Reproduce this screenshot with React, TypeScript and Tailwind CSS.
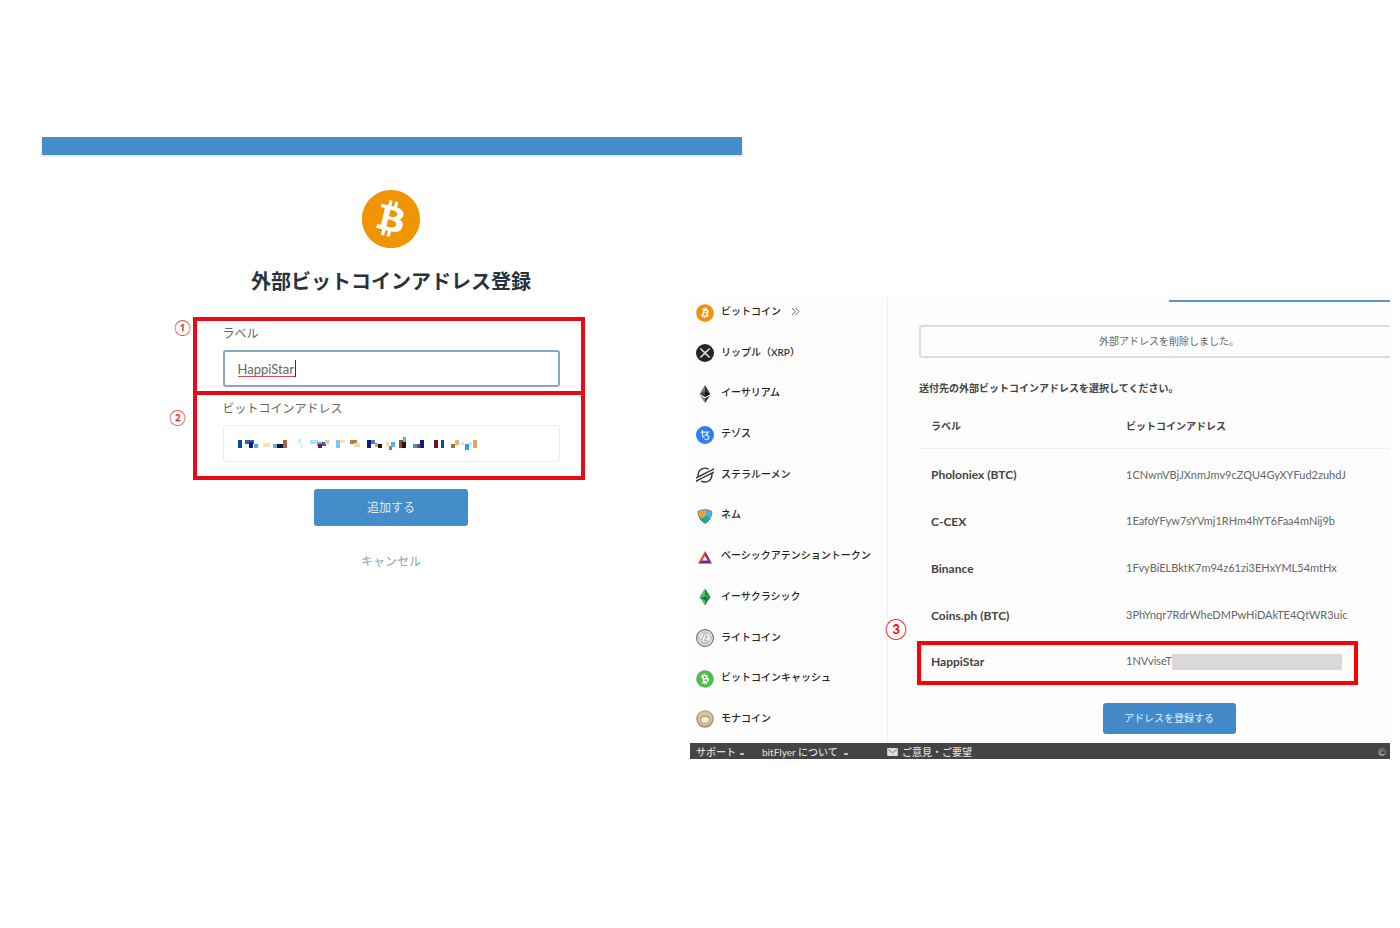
import React from "react";
import { FaBitcoin } from "react-icons/fa";
import { SiStellar } from "react-icons/si";

const FONT = "font-['Lato','Noto_Sans_CJK_JP',sans-serif]";

function XrpIcon() {
  return (
    <svg viewBox="0 0 18 18" className="size-[18px]" aria-hidden="true">
      <circle cx="9" cy="9" r="9" fill="#20262c" />
      <path d="M4.400 4.400 7.400 7.600q1.600 1.300 3.200 0l3-3.200M4.400 13.600l3-3.200q1.600-1.300 3.200 0l3 3.200" fill="none" stroke="#e8ecef" strokeWidth="1.400" />
    </svg>
  );
}

function EtherIcon() {
  return (
    <svg viewBox="0 0 18 18" className="size-[18px]" aria-hidden="true">
      <path d="M9 0 3.700 9 9 12z" fill="#777" />
      <path d="M9 0l5.300 9L9 12z" fill="#333" />
      <path d="M3.700 9 9 6.600V12z" fill="#444" />
      <path d="M14.300 9 9 6.600V12z" fill="#111" />
      <path d="M3.900 10.400 9 13.300V18z" fill="#888" />
      <path d="M14.100 10.400 9 13.300V18z" fill="#333" />
    </svg>
  );
}

function TezosIcon() {
  return (
    <svg viewBox="0 0 18 18" className="size-[18px]" aria-hidden="true">
      <circle cx="9" cy="9" r="9" fill="#2c7df7" />
      <path d="M4.500 6.200h7.800L9.600 9c2.200 0 3.200 1 3.200 2.500 0 2-3 2.900-4.200 1.300M6.500 4v5.500c0 1.600 1 2 2.200 1.500" fill="none" stroke="#d9e9ff" strokeWidth="1.300" />
    </svg>
  );
}

function NemIcon() {
  return (
    <svg viewBox="0 0 18 18" className="size-[18px]" aria-hidden="true">
      <path d="M2 4.500Q5.500 2.500 9 2.500L9.500 8Q8 11 3.500 11.500Q1.800 8 2 4.500z" fill="#f0a22e" />
      <path d="M9 2.500q3.500 0 7 2-.1 4-1.700 7.500Q12.500 8 9.500 8z" fill="#5fa9dd" />
      <path d="M3.500 11.500Q8 11 9.500 8q3 0 4.800 4Q12.500 15 9 16.500 5.500 14.800 3.500 11.500z" fill="#20a99b" />
      <path d="M2 4.500Q5.500 2.500 9 2.500t7 2Q15.800 12.500 9 16.500 2.200 12.500 2 4.500z" fill="none" stroke="#4b6f7c" strokeWidth=".7" />
    </svg>
  );
}

function BatIcon() {
  return (
    <svg viewBox="0 0 18 18" className="size-[18px]" aria-hidden="true">
      <path d="M9 3 9 8 6 13 2 15.500z" fill="#f0512d" />
      <path d="M9 3l7 12.500L12 13 9 8z" fill="#9b2468" />
      <path d="M2 15.500 6 12.600h6l4 2.900z" fill="#5d2d91" />
    </svg>
  );
}

function ClassicIcon() {
  return (
    <svg viewBox="0 0 18 18" className="size-[18px]" aria-hidden="true">
      <path d="M9 .5 3.500 9 9 17.500z" fill="#4cc26f" />
      <path d="M9 .5 14.500 9 9 17.500z" fill="#1e8f43" />
      <path d="M4.500 10 9 6.500l4.500 3.500L9 12z" fill="#14733a" />
      <path d="M6 9.500 9 7.500l3 2" fill="none" stroke="#9ce0ae" strokeWidth=".8" />
    </svg>
  );
}

function LitecoinIcon() {
  return (
    <svg viewBox="0 0 18 18" className="size-[18px]" aria-hidden="true">
      <circle cx="9" cy="9" r="8.400" fill="#f4f4f4" stroke="#707070" strokeWidth="1.200" />
      <circle cx="9" cy="9" r="6.200" fill="#ececec" stroke="#a4a4a4" strokeWidth=".9" />
      <path d="M8.200 4.500h2.200L9.300 8.200l1.600-.6-.4 1.500-1.600.6-.6 2.100h4l-.4 1.600H5.600l.9-3-1.200.4.4-1.500 1.200-.4z" fill="#fff" stroke="#909090" strokeWidth=".7" />
    </svg>
  );
}

function MonaIcon() {
  return (
    <svg viewBox="0 0 18 18" className="size-[18px]" aria-hidden="true">
      <circle cx="9" cy="9" r="8.700" fill="#a79667" />
      <circle cx="9" cy="8.500" r="7.300" fill="#d3c7a0" />
      <ellipse cx="9" cy="9.500" rx="5.400" ry="4.200" fill="#b5a478" />
      <ellipse cx="9" cy="9.800" rx="4" ry="2.900" fill="#f3edd9" />
    </svg>
  );
}

const coins: { name: string; icon: React.ReactNode; current?: boolean }[] = [
  { name: "ビットコイン", icon: <FaBitcoin className="size-[18px] text-[#ef9208]" />, current: true },
  { name: "リップル（XRP）", icon: <XrpIcon /> },
  { name: "イーサリアム", icon: <EtherIcon /> },
  { name: "テゾス", icon: <TezosIcon /> },
  { name: "ステラルーメン", icon: <SiStellar className="size-[18px] text-[#333]" /> },
  { name: "ネム", icon: <NemIcon /> },
  { name: "ベーシックアテンショントークン", icon: <BatIcon /> },
  { name: "イーサクラシック", icon: <ClassicIcon /> },
  { name: "ライトコイン", icon: <LitecoinIcon /> },
  { name: "ビットコインキャッシュ", icon: <FaBitcoin className="size-[18px] -rotate-[28deg] text-[#4cc04a]" /> },
  { name: "モナコイン", icon: <MonaIcon /> },
];

const addresses = [
  ["Pholoniex (BTC)", "1CNwnVBjJXnmJmv9cZQU4GyXYFud2zuhdJ"],
  ["C-CEX", "1EafoYFyw7sYVmj1RHm4hYT6Faa4mNij9b"],
  ["Binance", "1FvyBiELBktK7m94z61zi3EHxYML54mtHx"],
  ["Coins.ph (BTC)", "3PhYnqr7RdrWheDMPwHiDAkTE4QtWR3uic"],
];

const mosaic: [number, number, number, number, string][] = [
  [15, 15, 4, 8, "#0b4a9c"], [22, 15, 9, 4, "#2a66a8"], [26, 17, 4, 6, "#0a1f80"], [31, 19, 4, 4, "#5aa8d8"],
  [40, 18, 7, 4, "#f9e2b8"], [50, 19, 5, 4, "#7aa8d0"], [54, 19, 8, 4, "#0a1848"], [60, 15, 4, 8, "#a5663a"],
  [75, 14, 3, 4, "#c4f2fa"], [77, 19, 3, 4, "#dff5dc"], [87, 15, 8, 4, "#a8e2fb"], [94, 17, 5, 4, "#6aa2d8"],
  [95, 19, 4, 4, "#74182e"], [99, 17, 4, 4, "#3f62ad"], [102, 15, 4, 4, "#efc19a"], [113, 15, 4, 8, "#7cc8f0"],
  [117, 15, 5, 3, "#fadfae"], [127, 15, 7, 4, "#bb7a3b"], [131, 18, 6, 4, "#f2e0aa"], [144, 15, 4, 8, "#0a1a80"],
  [148, 15, 4, 4, "#3a80c8"], [152, 18, 3, 4, "#d6a05c"], [155, 19, 4, 4, "#301020"], [163, 17, 3, 4, "#f6dd9a"],
  [166, 21, 3, 4, "#b87838"], [168, 17, 4, 5, "#58b6e6"], [176, 15, 4, 8, "#8c4a28"], [179, 17, 4, 6, "#1c1430"],
  [180, 12, 3, 5, "#58b0e6"], [190, 19, 5, 4, "#4a90c8"], [194, 19, 4, 4, "#8a4a30"], [197, 15, 4, 8, "#101c8c"],
  [211, 15, 4, 8, "#6c1426"], [218, 15, 3, 8, "#16449c"], [228, 19, 4, 4, "#b06c30"], [232, 15, 4, 5, "#eab468"],
  [238, 17, 3, 3, "#b4ecf8"], [242, 19, 4, 6, "#2f9fe0"], [246, 17, 3, 4, "#cdeef8"], [250, 15, 4, 8, "#e0a468"],
];

function RegisterPanel() {
  return (
    <section className="ml-[3%] w-1/2 shrink-0 pt-[137px]">
      <header className="h-[18px] bg-[#458cca] shadow-[0_1px_2px_#d8d8e4]" />
      <div className="flex flex-col items-center pt-[34px] pr-[2px]">
        <FaBitcoin className="size-[60px] text-[#f19402]" aria-hidden="true" />
        <h1 className="mt-[17px] text-[20px] leading-[30px] font-bold text-[#28313e]">外部ビットコインアドレス登録</h1>
        <form className="mt-[21px] flex w-[337px] flex-col items-center" onSubmit={(e) => e.preventDefault()}>
          <div className="relative -mr-[25px] -ml-[30px] w-[392px] border-4 border-[#e60b17] pt-[5px] pr-[21px] pb-[4px] pl-[26px]">
            <span className="absolute -top-[4px] -left-[22px] text-[15px] leading-[20px] text-[#ee1c24]">①</span>
            <label htmlFor="label" className="block text-[12px] leading-[16px] text-[#666]">ラベル</label>
            <div className="relative mt-[8px]">
              <input
                id="label"
                defaultValue="HappiStar"
                className="h-[37px] w-full rounded-[3px] border-2 border-[#86a7c2] bg-white px-[13px] text-[13px] text-[#666] outline-none"
              />
              <span className="absolute top-[26px] left-[15px] h-px w-[57px] bg-[#e0455a]" />
              <span className="absolute top-[10px] left-[72px] h-[17px] w-px bg-[#333]" />
            </div>
          </div>
          <div className="relative -mt-[4px] -mr-[25px] -ml-[30px] w-[392px] border-4 border-[#e60b17] pt-[6px] pr-[21px] pb-[14px] pl-[26px]">
            <span className="absolute top-[12px] -left-[27px] text-[15px] leading-[20px] text-[#ee1c24]">②</span>
            <label htmlFor="address" className="block text-[12px] leading-[16px] text-[#666]">ビットコインアドレス</label>
            <div className="relative mt-[8px]">
              <input id="address" className="h-[37px] w-full rounded-[3px] border border-[#ececec] bg-white px-[13px] text-[13px] outline-none" />
              <svg viewBox="0 0 270 40" className="pointer-events-none absolute top-0 left-0 h-[40px] w-[270px]" aria-hidden="true">
                {mosaic.map(([x, y, w, h, c], i) => (
                  <rect key={i} x={x} y={y} width={w} height={h} fill={c} />
                ))}
              </svg>
            </div>
          </div>
          <button type="submit" className="mt-[9px] h-[37px] w-[154px] rounded-[3px] bg-[#458cca] text-[12px] text-[#dcebf7]">追加する</button>
          <a href="#" className="mt-[28px] text-[12px] leading-[16px] text-[#7fa3c4]">キャンセル</a>
        </form>
      </div>
    </section>
  );
}

function Sidebar() {
  return (
    <nav className="w-[198px] shrink-0 border-r border-[#eee] pt-[4px] pb-[15px] pl-[6px]">
      <ul className="flex h-full flex-col justify-between">
        {coins.map((c) => (
          <li key={c.name}>
            <a href="#" className="flex h-5 items-center gap-[7px] text-[10px] leading-[20px] font-medium whitespace-nowrap text-[#222]">
              <span className="mt-[3px] shrink-0">{c.icon}</span>
              <span>{c.name}</span>
              {c.current && (
                <svg viewBox="0 0 9 9" className="ml-[3px] size-[9px]" fill="none" stroke="#666" aria-hidden="true">
                  <path d="M1 1l3.500 3.500L1 8M4.500 1 8 4.500 4.500 8" />
                </svg>
              )}
            </a>
          </li>
        ))}
      </ul>
    </nav>
  );
}

function AddressPanel() {
  return (
    <section className="mt-[297px] mr-[10px] -ml-[52px] min-w-0 flex-1 self-start overflow-x-clip bg-[#fdfdfd]">
      <div className="flex">
        <Sidebar />
        <main className="min-w-0 flex-1 pb-[9px] pl-[31px]">
          <div className="-mr-[29px] pt-[3px]">
            <div className="ml-auto h-[2px] w-1/2 bg-[#5b93c3]" />
            <p className="mt-[23px] rounded-[3px] border-2 border-[#dcdcdc] py-[5px] text-center text-[10px] leading-[19px] text-[#666]">
              外部アドレスを削除しました。
            </p>
            <h2 className="mt-[22px] text-[10px] leading-[16px] font-bold text-[#444]">送付先の外部ビットコインアドレスを選択してください。</h2>
            <div className="relative mt-[8px]">
              <table className="w-full table-fixed border-collapse text-left text-[11px] text-[#666]">
                <thead>
                  <tr className="h-[44px] border-b border-[#eee] text-[10px] text-[#444]">
                    <th className="w-[207px] pt-[2px] pl-[12px] font-bold">ラベル</th>
                    <th className="pt-[2px] font-bold">ビットコインアドレス</th>
                  </tr>
                </thead>
                <tbody>
                  {addresses.map(([name, address]) => (
                    <tr key={name} className="h-[47px]">
                      <th className="pt-[6px] pl-[12px] text-[12px] font-bold text-[#444]">{name}</th>
                      <td className="pt-[6px]">{address}</td>
                    </tr>
                  ))}
                  <tr className="h-[47px]">
                    <th className="pt-[4px] pl-[12px] text-[12px] font-bold text-[#444]">HappiStar</th>
                    <td className="pt-[4px]">
                      <div className="flex items-center">
                        <span className="w-[46px]">1NVviseT</span>
                        <span className="h-[16px] w-[170px] bg-[#d9d9d9]" />
                      </div>
                    </td>
                  </tr>
                </tbody>
              </table>
              <div className="pointer-events-none absolute right-[61px] bottom-[-2px] -left-[2px] h-[44px] border-4 border-[#f00]">
                <span className="absolute -top-[31px] -left-[36px] text-[20px] leading-[28px] text-[#f00]">③</span>
              </div>
            </div>
            <div className="mt-[20px] text-center">
              <button type="button" className="h-[31px] w-[133px] rounded-[3px] bg-[#428aca] text-[10px] text-[#e4f0fa]">アドレスを登録する</button>
            </div>
          </div>
        </main>
      </div>
      <footer className="flex h-[16px] items-center bg-[#444] pr-[4px] pl-[6px] text-[10px] leading-[16px] font-medium text-[#ddd]">
        <div className="flex w-[191px] items-center pt-[2px]">
          <a href="#">サポート</a>
          <span className="mt-[4px] ml-[4px] h-[2px] w-[4px] bg-[#bbb]" />
          <a href="#" className="ml-[18px]">bitFlyer について</a>
          <span className="mt-[4px] ml-[6px] h-[2px] w-[4px] bg-[#bbb]" />
        </div>
        <a href="#" className="flex items-center gap-[4px] pt-[2px]">
          <svg viewBox="0 0 12 9" className="h-[8px] w-[11px]" aria-hidden="true">
            <rect width="12" height="9" rx="1" fill="#ddd" />
            <path d="M1 1.500 6 5.500l5-4" fill="none" stroke="#777" />
          </svg>
          ご意見・ご要望
        </a>
        <span className="ml-auto pt-[2px] text-[#bbb]">©</span>
      </footer>
    </section>
  );
}

export default function App() {
  return (
    <div className={`flex min-h-screen overflow-x-clip bg-white ${FONT}`}>
      <RegisterPanel />
      <AddressPanel />
    </div>
  );
}
